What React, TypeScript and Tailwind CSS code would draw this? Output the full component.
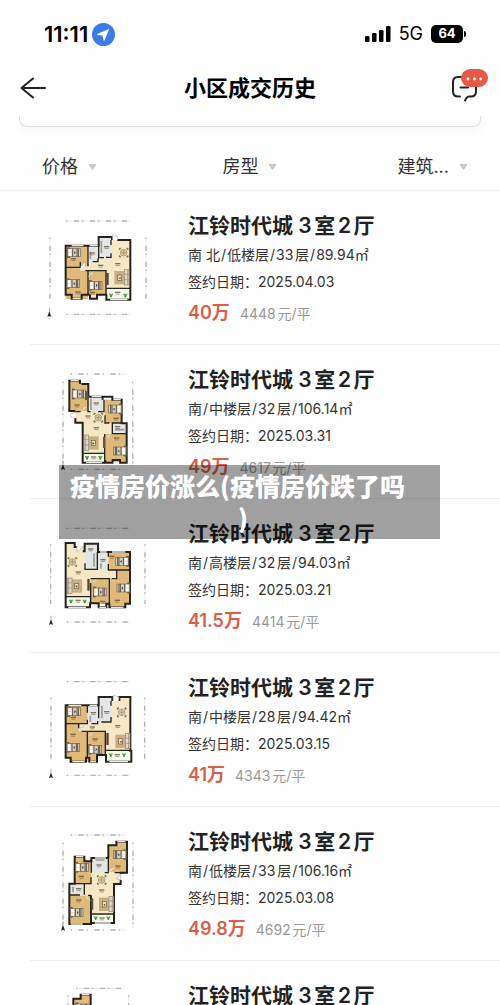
import { Fragment } from 'react';
import type { ReactNode } from 'react';

interface Deal {
  id: number;
  title: string;
  detail: string;
  date: string;
  total: string;
  unit: string;
  plan: ReactNode;
}

interface PlanProps {
  top: number;
  label: string;
  children: ReactNode;
}

const WOOD = '#e0ba78';
const TILE = '#f4e8c6';
const WET = '#e3e6e6';
const WALL = '#26221d';

function Plan({ top, label, children }: PlanProps) {
  return (
    <svg viewBox={`0 ${top} 420 375`} className="w-[140px] shrink-0" role="img" aria-label={label}>
      {children}
    </svg>
  );
}

function Dims({ x1, x2, y1, y2, left, right, top, bottom }: Record<string, number>) {
  const d = [
    `M${x1} ${top}H${x2}`,
    `M${x1} ${bottom}H${x2}`,
    `M${left} ${y1}V${y2}`,
    `M${right} ${y1}V${y2}`,
  ].join('');
  return (
    <g fill="none">
      <path d={d} stroke="#e2e2e2" strokeWidth="2" />
      <path d={d} stroke="#b4b4b4" strokeWidth="4" strokeDasharray="4 20 15 9" />
    </g>
  );
}

function Compass({ x, y }: { x: number; y: number }) {
  return (
    <g fill="#222">
      <path d={`M${x} ${y}l6 18l-6-3l-6 3z`} />
      <path d={`M${x - 1} ${y - 10}h2v10h-2z`} fill="#888" />
    </g>
  );
}

function Bed({ x, y, flip }: { x: number; y: number; flip?: boolean }) {
  return (
    <g transform={`translate(${x} ${y})${flip ? ' translate(40 0) scale(-1 1)' : ''}`}>
      <rect x="-2" y="-4" width="9" height="32" fill="#6b5a43" />
      <rect width="38" height="24" fill="#d8cfc0" stroke="#6d6254" strokeWidth="2" />
      <rect x="3" y="2" width="8" height="9" fill="#fff" />
      <rect x="3" y="13" width="8" height="9" fill="#fff" />
      <path d="M15 0v24M28 0v24M32 0v24" stroke="#5b5148" strokeWidth="3" />
      <path d="M20 8l5 4l-5 5z" fill="#4a3d32" />
    </g>
  );
}

function Dining({ x, y }: { x: number; y: number }) {
  return (
    <g transform={`translate(${x} ${y})`} stroke="#9b845c" strokeWidth="2">
      <path d="M-14-9l5-5M9-14l5 5M14 9l-5 5M-9 14l-5-5" stroke="#8b7855" strokeWidth="5" />
      <circle r="10" fill="#d9cba5" />
      <path d="M-7 0H7M0-7V7" />
    </g>
  );
}

function Sofa({ x, y, flip }: { x: number; y: number; flip?: boolean }) {
  return (
    <g transform={`translate(${x} ${y})${flip ? ' translate(46 0) scale(-1 1)' : ''}`}>
      <rect x="12" y="2" width="32" height="40" fill="#c9ae85" />
      <rect x="22" y="14" width="12" height="16" fill="#eadbb8" stroke="#765d3d" strokeWidth="2" />
      <path d="M25 20l6 3l-5 4z" fill="#50402c" />
      <rect x="0" y="-2" width="14" height="46" fill="#ddd8cd" stroke="#8f8777" strokeWidth="2" />
      <path d="M0 12h14M0 28h14M4-2v46" stroke="#8f8777" strokeWidth="2" />
    </g>
  );
}

function Plant({ x, y }: { x: number; y: number }) {
  return (
    <g transform={`translate(${x} ${y})`} fill="#6aa84a">
      <ellipse cx="-3" cy="-1" rx="5" ry="3" transform="rotate(35)" />
      <ellipse cx="3" cy="-1" rx="5" ry="3" transform="rotate(-35)" />
      <circle cy="2" r="3" fill="#4a8735" />
    </g>
  );
}

function Labels({ points }: { points: number[][] }) {
  return (
    <g fill="#5d4a2c">
      {points.map(([x, y]) => (
        <g key={`${x}-${y}`}>
          <rect x={x - 8} y={y - 4} width="16" height="4" opacity="0.75" />
          <rect x={x - 6} y={y + 2} width="12" height="3" opacity="0.5" />
        </g>
      ))}
    </g>
  );
}

const planEast = (
  <Plan top={0} label="户型图 89.94㎡">
    <Dims x1={108} x2={300} y1={98} y2={282} left={60} right={348} top={48} bottom={328} />
    <Compass x={58} y={318} />
    <path d="M206 96H247V105H301V280H232V265H228V271H201V282H180V271H157V282H125V271H107V122H206z" fill={TILE} />
    <path d="M107 122H174V184H150V197H174V282H107z" fill={WOOD} />
    <path d="M174 197H228V270H174z" fill={WOOD} />
    <path d="M174 122H206V168H174z" fill={WET} />
    <path d="M209 98H243V157H209z" fill={WET} />
    <path d="M231 251H301V281H231z" fill="#f5faef" />
    <path d="M246 105V96H206V122H107V269H125V281H155V269H180M180 269V281H201V269H229V284H301V105H262" fill="none" stroke={WALL} strokeWidth="6" />
    <path d="M107 187H151V171M174 122V184M174 197V270M166 197H228V270M206 122V158H222M243 105V120M243 145V157H228M188 170H204V160M229 250H301" fill="none" stroke={WALL} strokeWidth="4" />
    <path d="M125 122H160M179 122H203M128 281H152M240 284H292" stroke="#e9e7df" strokeWidth="4" />
    <path d="M248 104V89L262 94V105M151 187l15-18v18M174 215q14-3 16-16" fill="#fff" stroke="#aaa" strokeWidth="2" />
    <Bed x={113} y={131} />
    <Bed x={111} y={224} />
    <Bed x={178} y={229} />
    <Dining x={281} y={143} />
    <Sofa x={251} y={196} flip />
    <path d="M229 204h7v36h-7z" fill="#4f4637" />
    <path d="M214 108v36M181 140v22" stroke="#999" strokeWidth="5" />
    <Plant x={243} y={272} />
    <Plant x={286} y={272} />
    <Labels points={[[130, 163], [144, 263], [187, 264], [263, 178], [212, 183], [230, 127], [187, 146], [263, 264]]} />
  </Plan>
);

const planTall = (
  <Plan top={-3} label="户型图 106.14㎡">
    <Dims x1={122} x2={290} y1={65} y2={320} left={99} right={308} top={42} bottom={328} />
    <Compass x={99} y={312} />
    <path d="M118 62H148V72H176V108H218V118H276V190H291V309H229V306H158V188H136V155H118z" fill={TILE} />
    <path d="M118 62H148V72H175V153H118z" fill={WOOD} />
    <path d="M225 119H275V189H225zM225 222H289V308H225z" fill={WOOD} />
    <path d="M177 110H218V153H177zM248 191H289V220H248z" fill={WET} />
    <path d="M160 281H223V305H160z" fill="#f5faef" />
    <path d="M154 72H175V108M150 72V62H118V153H136M136 174V188H158V308H226M226 300V308H248V300H270V308H290V190H275V119H247V110H218V119M176 110H218" fill="none" stroke={WALL} strokeWidth="6" />
    <path d="M136 155H152M174 108V155H182M204 155H222V119M225 166V189H238M275 189H247V221H289M224 222V306M160 280H224" fill="none" stroke={WALL} strokeWidth="4" />
    <path d="M122 62H146M185 110H214M250 119H272M250 308H268M168 308H216" stroke="#e9e7df" strokeWidth="4" />
    <path d="M135 157l-14 5q0 13 14 13M155 154q2-14 16-15M226 236q14-2 16-14" fill="#fff" stroke="#aaa" strokeWidth="2" />
    <Bed x={128} y={90} />
    <Bed x={234} y={135} flip />
    <Bed x={248} y={261} flip />
    <Dining x={205} y={173} />
    <Sofa x={162} y={227} />
    <path d="M219 230h6v34h-6zM165 93h8v27h-8z" fill="#66563f" />
    <path d="M183 116v34M255 209h28" stroke="#999" strokeWidth="5" />
    <Plant x={171} y={294} />
    <Plant x={211} y={294} />
    <Labels points={[[141, 137], [199, 131], [258, 177], [199, 205], [174, 170], [260, 236], [263, 202], [191, 293]]} />
  </Plan>
);

const planWest = (
  <Plan top={9} label="户型图 94.03㎡">
    <Dims x1={110} x2={300} y1={103} y2={282} left={62} right={345} top={55} bottom={336} />
    <Compass x={63} y={327} />
    <path d="M107 99H136V108H164V100H204V126H299V282H286V292H238V282H182V290H107z" fill={TILE} />
    <path d="M235 127H299V180H235zM260 180H299V282H286V292H238V206H260zM182 206H236V282H182z" fill={WOOD} />
    <path d="M166 101H202V178H166zM204 127H234V180H204z" fill={WET} />
    <path d="M109 261H177V288H109z" fill="#f5faef" />
    <path d="M140 111H134V99H107V292H180V280H206V292H229V281H238V292H286V281H300V126H204V101H164V124H158" fill="none" stroke={WALL} strokeWidth="6" />
    <path d="M165 160V178H202V126M235 126V140M235 162V180H299M182 206H238V282M182 219V282M245 206H260V180M107 260H180" fill="none" stroke={WALL} strokeWidth="4" />
    <path d="M210 126H230M246 126H286M208 292H228M243 292H280M115 292H168" stroke="#e9e7df" strokeWidth="4" />
    <path d="M141 111v14l17-12v-4M184 220q14-2 16-13M240 217q14-2 16-11" fill="#fff" stroke="#aaa" strokeWidth="2" />
    <Bed x={255} y={142} flip />
    <Bed x={259} y={222} flip />
    <Bed x={191} y={234} />
    <Dining x={127} y={156} />
    <Sofa x={112} y={206} />
    <path d="M172 207h7v35h-7z" fill="#4f4637" />
    <path d="M192 130v40M213 160v16" stroke="#999" strokeWidth="5" />
    <Plant x={123} y={275} />
    <Plant x={164} y={275} />
    <Labels points={[[182, 119], [219, 151], [246, 141], [145, 188], [218, 276], [262, 273], [144, 273]]} />
  </Plan>
);

const planMid = (
  <Plan top={6} label="户型图 94.42㎡">
    <Dims x1={110} x2={300} y1={98} y2={286} left={63} right={344} top={50} bottom={331} />
    <Compass x={63} y={322} />
    <path d="M206 96H301V290H229V270H200V290H172V290H122V279H107V121H206z" fill={TILE} />
    <path d="M107 122H172V176H107zM107 177H146V198H172V290H122V279H107zM172 199H226V268H200V289H172z" fill={WOOD} />
    <path d="M174 122H205V175H174zM208 98H243V170H208z" fill={WET} />
    <path d="M229 257H303V288H229z" fill="#f5faef" />
    <path d="M247 108V96H206V121H107V278H122V290H168V278H178V290H201V270H228V290H304V257H301V96H268V108" fill="none" stroke={WALL} strokeWidth="6" />
    <path d="M107 176H172V164M172 121V143M146 176V190M155 199H226V270M172 199V278M206 121V160M243 108V122M243 156V171H214M184 176H203V168M228 256H303" fill="none" stroke={WALL} strokeWidth="4" />
    <path d="M116 121H154M179 121H201M127 290H164M180 290H198M238 290H294" stroke="#e9e7df" strokeWidth="4" />
    <path d="M250 107V91L266 96V107M148 190q12-2 18-13M174 214q12-2 16-14" fill="#fff" stroke="#aaa" strokeWidth="2" />
    <Bed x={113} y={128} />
    <Bed x={111} y={235} />
    <Bed x={177} y={241} />
    <Dining x={275} y={142} />
    <Sofa x={254} y={207} flip />
    <path d="M229 204h7v36h-7z" fill="#4f4637" />
    <path d="M216 122v38M181 152v18" stroke="#999" strokeWidth="5" />
    <Plant x={242} y={271} />
    <Plant x={282} y={271} />
    <Labels points={[[130, 159], [129, 210], [195, 224], [263, 184], [187, 188], [230, 142], [190, 145], [262, 271]]} />
  </Plan>
);

const planCorner = (
  <Plan top={3} label="户型图 106.16㎡">
    <Dims x1={122} x2={288} y1={68} y2={325} left={99} right={309} top={45} bottom={330} />
    <Compass x={99} y={314} />
    <path d="M235 74H260V64H290V158H272V192H252V310H182V312H118V191H133V110H162V118H184V114H235z" fill={TILE} />
    <path d="M237 76H260V66H290V156H237zM134 111H162V125H183V190H134zM118 227H182V312H118z" fill={WOOD} />
    <path d="M186 116H233V156H186zM120 192H162V223H120z" fill={WET} />
    <path d="M184 282H250V308H184z" fill="#f5faef" />
    <path d="M235 114V76H259V65H291V158H272V162M272 180V192H252V309H183M235 114H184V124H163V110H134V191H118V312H183V226" fill="none" stroke={WALL} strokeWidth="6" />
    <path d="M235 112V158H224M254 158H290M184 124V158M183 172V191H134M163 191V224M118 225H150M183 282H252M183 226H174" fill="none" stroke={WALL} strokeWidth="4" />
    <path d="M262 65H286M138 110H160M195 114H228M122 312H158M194 309H242" stroke="#e9e7df" strokeWidth="4" />
    <path d="M272 163v16l-13-2zM236 157q5-15 18-14M182 242q-14-2-16-16" fill="#fff" stroke="#aaa" strokeWidth="2" />
    <Bed x={248} y={92} flip />
    <Bed x={137} y={130} />
    <Bed x={121} y={265} />
    <Dining x={215} y={180} />
    <Sofa x={205} y={231} flip />
    <path d="M184 235h6v34h-6z" fill="#66563f" />
    <path d="M197 120h26M129 200v17" stroke="#999" strokeWidth="5" />
    <Plant x={197} y={295} />
    <Plant x={235} y={295} />
    <Labels points={[[264, 140], [154, 171], [207, 137], [146, 208], [146, 242], [215, 212], [216, 296]]} />
  </Plan>
);

const planLast = (
  <Plan top={3} label="户型图">
    <Dims x1={138} x2={276} y1={64} y2={320} left={114} right={296} top={43} bottom={328} />
    <path d="M130 74H152V62H182V108H222V118H280V300H162V188H130z" fill={TILE} />
    <path d="M130 74H152V62H182V153H130z" fill={WOOD} />
    <path d="M182 108V62H152V74H130V153M182 108H222V118H280V300H162V188H130" fill="none" stroke={WALL} strokeWidth="6" />
    <path d="M155 62H178" stroke="#e9e7df" strokeWidth="4" />
    <Bed x={138} y={90} />
  </Plan>
);

const deals: Deal[] = [
  { id: 1, title: '江铃时代城 3室2厅', detail: '南 北/低楼层/33层/89.94㎡', date: '2025.04.03', total: '40万', unit: '4448元/平', plan: planEast },
  { id: 2, title: '江铃时代城 3室2厅', detail: '南/中楼层/32层/106.14㎡', date: '2025.03.31', total: '49万', unit: '4617元/平', plan: planTall },
  { id: 3, title: '江铃时代城 3室2厅', detail: '南/高楼层/32层/94.03㎡', date: '2025.03.21', total: '41.5万', unit: '4414元/平', plan: planWest },
  { id: 4, title: '江铃时代城 3室2厅', detail: '南/中楼层/28层/94.42㎡', date: '2025.03.15', total: '41万', unit: '4343元/平', plan: planMid },
  { id: 5, title: '江铃时代城 3室2厅', detail: '南/低楼层/33层/106.16㎡', date: '2025.03.08', total: '49.8万', unit: '4692元/平', plan: planCorner },
  { id: 6, title: '江铃时代城 3室2厅', detail: '', date: '', total: '', unit: '', plan: planLast },
];

const filters = [
  { label: '价格', align: 'justify-self-start pl-2.5' },
  { label: '房型', align: 'justify-self-center' },
  { label: '建筑...', align: 'justify-self-end' },
];

function StatusBar() {
  return (
    <div className="flex h-[60px] shrink-0 items-center justify-between pl-11 pr-[34px] pt-2 text-black">
      <div className="flex items-center gap-1">
        <span className="text-[22px] font-semibold">11:11</span>
        <svg viewBox="0 0 24 24" className="size-[23px]" aria-hidden="true">
          <circle cx="12" cy="12" r="12" fill="#3b7bec" />
          <path d="M18 6L5.500 11.600Q5 12.200 5.700 12.500L11 13.100L12.200 18.500Q12.700 19 13.100 18.300z" fill="#fff" />
        </svg>
      </div>
      <div className="flex items-center gap-2">
        <svg viewBox="0 0 26 16" className="h-4 w-[26px]" aria-hidden="true">
          <rect x="0" y="10" width="4.500" height="6" rx="1.200" />
          <rect x="7" y="7" width="4.500" height="9" rx="1.200" />
          <rect x="14" y="4" width="4.500" height="12" rx="1.200" />
          <rect x="21" y="0" width="4.500" height="16" rx="1.200" />
        </svg>
        <span className="text-lg">5G</span>
        <div className="flex items-center gap-px">
          <span className="flex h-[18px] w-8 items-center justify-center rounded-[5px] bg-black text-[13px] font-bold text-white">64</span>
          <span className="h-1.5 w-0.5 rounded-r-full bg-black" />
        </div>
      </div>
    </div>
  );
}

function NavBar() {
  return (
    <header className="grid h-14 shrink-0 grid-cols-[48px_1fr_48px] items-center px-3">
      <button type="button" aria-label="返回" className="pl-2">
        <svg viewBox="0 0 26 22" className="h-[22px] w-[26px]" fill="none" stroke="#222" strokeWidth="2" strokeLinecap="round" strokeLinejoin="round">
          <path d="M25 11H1.500M13 1.500L1.500 11L13 20.500" />
        </svg>
      </button>
      <h1 className="text-center text-[22px] font-bold text-black">小区成交历史</h1>
      <button type="button" aria-label="消息" className="justify-self-end">
        <svg viewBox="0 0 37 38" className="h-[38px] w-[37px]" fill="none">
          <path d="M9 27.500H7Q2 27.500 2 22.500V13Q2 8 7 8H20Q25 8 25 13V22.500Q25 27.500 20 27.500H18Q16.500 27.500 15.500 29L14 31.500" stroke="#222" strokeWidth="2" strokeLinecap="round" strokeLinejoin="round" />
          <path d="M9.500 18.500H17" stroke="#222" strokeWidth="2" strokeLinecap="round" />
          <rect x="10" y="0" width="27" height="18" rx="9" fill="#e65a45" />
          <g fill="#fff">
            <circle cx="17" cy="10" r="1.400" />
            <circle cx="23.500" cy="10" r="1.400" />
            <circle cx="29.500" cy="10" r="1.400" />
          </g>
        </svg>
      </button>
    </header>
  );
}

function FilterBar() {
  return (
    <div className="grid h-12 shrink-0 grid-cols-3 items-center border-b border-[#f3f3f3] px-8 text-lg text-[#333]">
      {filters.map(({ label, align }) => (
        <button key={label} type="button" className={`flex items-center gap-2.5 ${align}`}>
          {label}
          <svg viewBox="0 0 9 6" className="h-1.5 w-[9px]" aria-hidden="true">
            <path d="M1 0.500H8L4.500 5.500z" fill="#c9c9c9" stroke="#c9c9c9" strokeLinejoin="round" />
          </svg>
        </button>
      ))}
    </div>
  );
}

function DealRow({ deal }: { deal: Deal }) {
  return (
    <li className="ml-[30px] flex h-[154px] shrink-0 items-center border-b border-[#efefef]">
      {deal.plan}
      <div className="flex h-full flex-col pl-[18px] pt-5 whitespace-nowrap text-[#333]">
        <h2 className="text-[21px] leading-[30px] font-semibold text-[#222]">{deal.title}</h2>
        {deal.detail && (
          <>
            <p className="text-sm leading-[27px]">
              {deal.detail.split('/').map((part, i) => (
                <Fragment key={part}>
                  {i > 0 && <span className="px-px">/</span>}
                  {part}
                </Fragment>
              ))}
            </p>
            <p className="text-sm leading-[27px]">签约日期：{deal.date}</p>
            <p className="flex items-baseline gap-2.5">
              <span className="text-lg leading-9 font-semibold text-[#d6604a] [text-autospace:no-autospace]">{deal.total}</span>
              <span className="text-sm leading-9 text-[#999]">{deal.unit}</span>
            </p>
          </>
        )}
      </div>
    </li>
  );
}

export default function App() {
  return (
    <div className="relative flex h-screen flex-col overflow-hidden bg-[#fefefe] font-['Inter','Noto_Sans_CJK_SC',sans-serif] [text-autospace:normal]">
      <StatusBar />
      <NavBar />
      <div className="shrink-0 px-[19px] pb-4">
        <div className="h-[11px] rounded-b-lg border border-t-0 border-[#dfdfdf] shadow-[0_6px_10px_rgba(0,0,0,0.03)]" />
      </div>
      <FilterBar />
      <ul className="flex min-h-0 flex-1 flex-col overflow-y-auto [scrollbar-width:none]">
        {deals.map(deal => (
          <DealRow key={deal.id} deal={deal} />
        ))}
      </ul>

      <div className="absolute right-[60px] left-[59px] top-[465px] bg-black/37 pt-1 pb-1.5 pl-[11px] pr-6 font-['Noto_Sans_CJK_SC',sans-serif] text-[25px] leading-8 font-black whitespace-nowrap text-white [text-autospace:no-autospace]">
        <p>疫情房价涨么(疫情房价跌了吗</p>
        <p className="text-center">)</p>
      </div>
    </div>
  );
}
